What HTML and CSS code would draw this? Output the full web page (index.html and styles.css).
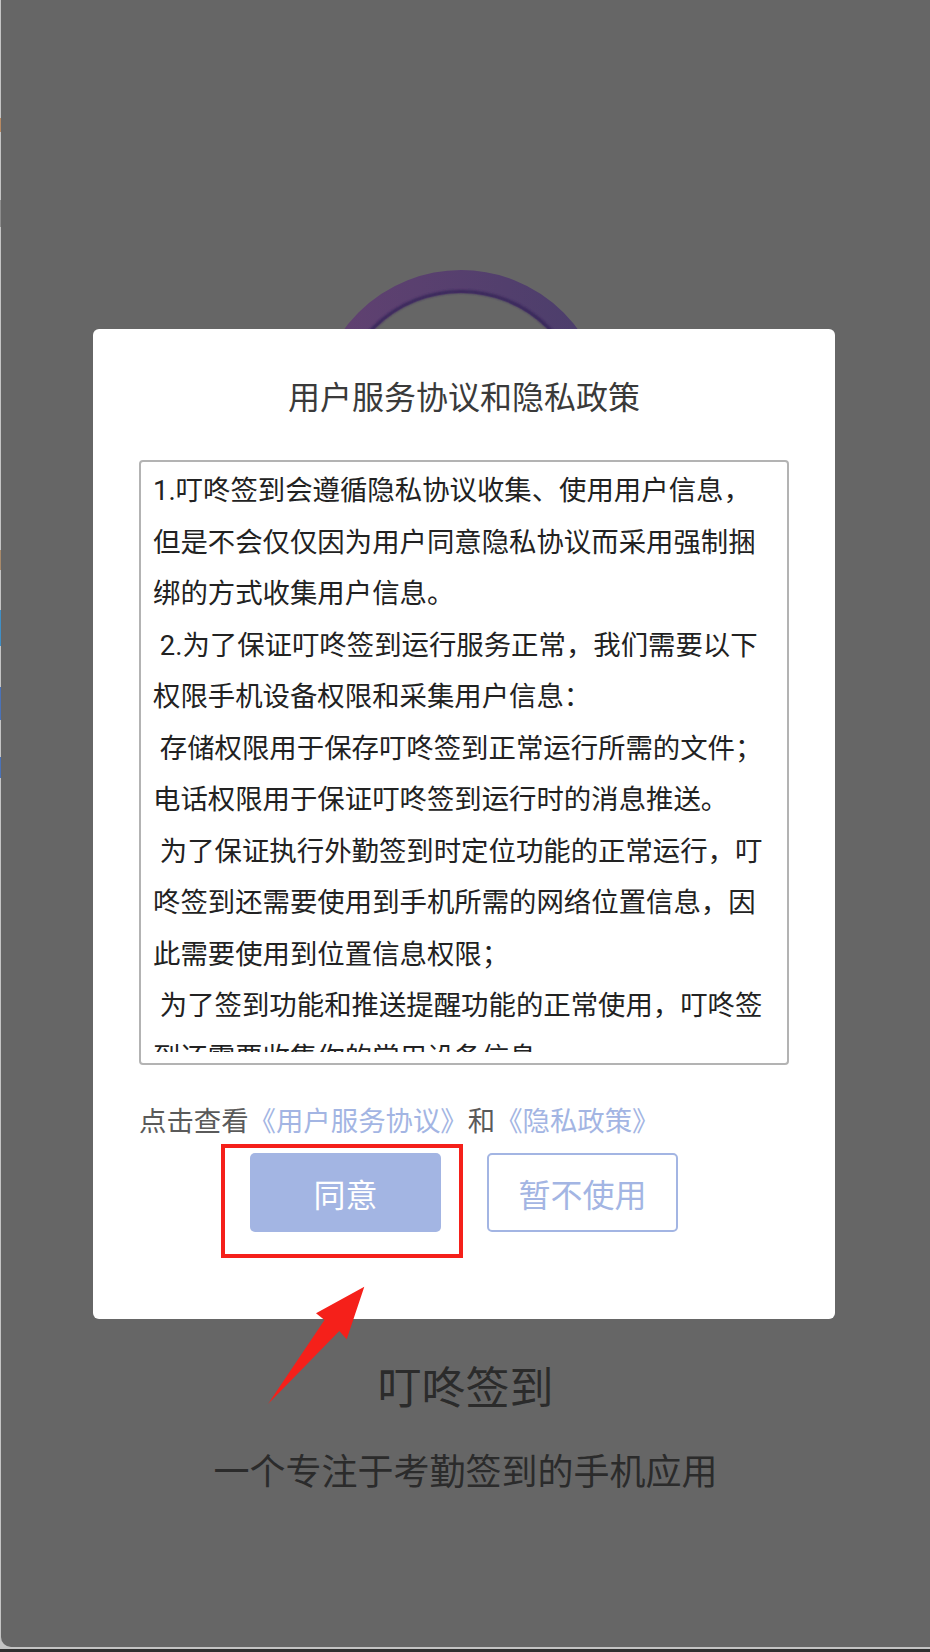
FILE: index.html
```html
<!DOCTYPE html>
<html lang="zh-CN">
<head>
    <meta charset="UTF-8">
    <meta name="viewport" content="width=device-width, initial-scale=1.0">
    <title>叮咚签到</title>
    <link rel="stylesheet" href="styles.css">
</head>
<body>

    <div class="screen">
        <div class="splash">
            <svg class="logo" width="290" height="290" viewBox="0 0 290 290">
                <defs>
                    <linearGradient id="ringFill" x1="0" y1="0" x2="1" y2="0">
                        <stop offset="0" stop-color="#614171"/>
                        <stop offset="1" stop-color="#4b3e6b"/>
                    </linearGradient>
                    <filter id="soft" x="-10%" y="-10%" width="120%" height="120%">
                        <feGaussianBlur stdDeviation="1.1"/>
                    </filter>
                </defs>
                <circle cx="145" cy="145" r="133.5" fill="none" stroke="url(#ringFill)" stroke-width="23"/>
                <circle cx="145" cy="145" r="123.5" fill="none" stroke="#37265a" stroke-width="3" filter="url(#soft)"/>
            </svg>
            <h1 class="app-name">叮咚签到</h1>
            <p class="slogan">一个专注于考勤签到的手机应用</p>
        </div>

        <div class="dialog">
            <h2 class="dialog-title">用户服务协议和隐私政策</h2>
            <div class="terms">
                <div class="terms-body">
<p>1.叮咚签到会遵循隐私协议收集、使用用户信息，但是不会仅仅因为用户同意隐私协议而采用强制捆绑的方式收集用户信息。</p>
<p> 2.为了保证叮咚签到运行服务正常，我们需要以下权限手机设备权限和采集用户信息：</p>
<p> 存储权限用于保存叮咚签到正常运行所需的文件；电话权限用于保证叮咚签到运行时的消息推送。</p>
<p> 为了保证执行外勤签到时定位功能的正常运行，叮咚签到还需要使用到手机所需的网络位置信息，因此需要使用到位置信息权限；</p>
<p> 为了签到功能和推送提醒功能的正常使用，叮咚签到还需要收集你的常用设备信息。</p>
                </div>
            </div>
            <p class="links">点击查看<a href="#">《用户服务协议》</a>和<a href="#">《隐私政策》</a></p>
            <div class="actions">
                <button class="btn btn-primary">同意</button>
                <button class="btn btn-ghost">暂不使用</button>
            </div>
            <div class="mark-frame"></div>
        </div>

        <svg class="arrow" width="110" height="130" viewBox="259 1280 110 130">
            <polygon points="364.3,1286.7 316,1313.3 324.5,1320 268,1404 339.3,1331 346.7,1339.3" fill="#f5201a"/>
        </svg>
    </div>
    <div class="bottom-bar"></div>

    <span class="edge-mark" style="top: 118px; height: 14px; background: #b98a62;"></span>
    <span class="edge-mark" style="top: 200px; height: 27px; background: #8d8d8d;"></span>
    <span class="edge-mark" style="top: 550px; height: 20px; background: #a98a6a;"></span>
    <span class="edge-mark" style="top: 610px; height: 36px; background: #3f8fc6;"></span>
    <span class="edge-mark" style="top: 687px; height: 33px; background: #4a72b8;"></span>
    <span class="edge-mark" style="top: 757px; height: 21px; background: #4a72b8;"></span>

</body>
</html>
```

FILE: styles.css
```css
body {
    margin: 0;
    width: 930px;
    height: 1652px;
    overflow: hidden;
    position: relative;
    background: #c4c4c4;
    font-family: Roboto, "Noto Sans CJK SC", sans-serif;
}

.screen {
    position: relative;
    margin-left: 1px;
    height: 1647px;
    background: #666666;
    border-bottom-left-radius: 10px;
    overflow: hidden;
}

.bottom-bar {
    margin-top: 2px;
    height: 3px;
    background: #2f2f2f;
}

.edge-mark {
    position: absolute;
    left: 0;
    width: 1px;
}

/* splash page under the dimmed overlay */
.splash {
    display: flex;
    flex-direction: column;
    align-items: center;
    padding-top: 270px;
}

.logo {
    display: block;
    margin-right: 9px;
}

.app-name {
    margin: 801px 0 0;
    font-size: 44px;
    line-height: 56px;
    font-weight: normal;
    color: #2b2b2b;
}

.slogan {
    margin: 33px 0 0;
    font-size: 36px;
    line-height: 46px;
    color: #2b2b2b;
}

/* agreement dialog */
.dialog {
    position: absolute;
    left: 92px;
    top: 329px;
    width: 742px;
    height: 990px;
    box-sizing: border-box;
    padding: 49px 46px 0;
    background: #ffffff;
    border-radius: 6px;
}

.dialog-title {
    margin: 0;
    font-size: 32px;
    line-height: 40px;
    font-weight: normal;
    text-align: center;
    color: #3a3a3a;
}

.terms {
    margin-top: 42px;
    height: 605px;
    box-sizing: border-box;
    padding: 4px 16px 11px 12px;
    border: 2px solid #b3b3b3;
    border-radius: 4px;
}

.terms-body {
    height: 100%;
    overflow: hidden;
    font-size: 27.4px;
    line-height: 51.5px;
    color: #222222;
}

.terms-body p {
    margin: 0;
    white-space: pre-wrap;
}

.links {
    margin: 39px 0 0;
    font-size: 27.4px;
    line-height: 36px;
    color: #5a5a5a;
}

.links a {
    color: #a3b5e3;
    text-decoration: none;
}

.actions {
    display: flex;
    justify-content: center;
    gap: 46px;
    margin-top: 13px;
}

.btn {
    width: 191px;
    height: 79px;
    box-sizing: border-box;
    border-radius: 5px;
    font-family: inherit;
    font-size: 32px;
    padding: 0;
    cursor: pointer;
}

.btn-primary {
    background: #a3b5e3;
    border: none;
    color: #ffffff;
}

.btn-ghost {
    background: #ffffff;
    border: 2px solid #a3b5e3;
    color: #a3b5e3;
}

/* screenshot annotation */
.mark-frame {
    position: absolute;
    left: 128px;
    top: 815px;
    width: 242px;
    height: 114px;
    box-sizing: border-box;
    border: 4px solid #f5201a;
}

.arrow {
    position: absolute;
    left: 258px;
    top: 1280px;
}
```
